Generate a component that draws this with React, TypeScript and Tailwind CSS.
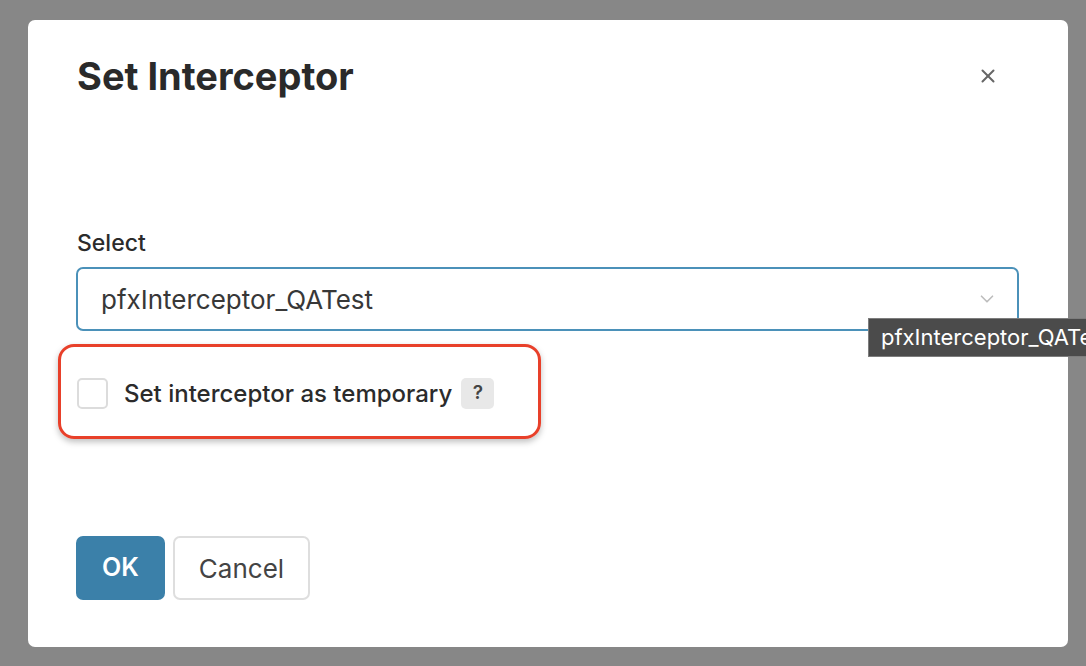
import { ChevronDown, X } from "lucide-react";

export default function App() {
  return (
    <div
      className="relative h-[666px] w-[1086px] overflow-hidden bg-[#878787] pl-[28px] pt-[20px]"
      style={{ fontFamily: "Inter, 'Noto Sans', sans-serif" }}
    >
      <div className="flex h-[627px] w-[1040px] flex-col rounded-[7px] bg-white pl-[49px] pr-[49px]">
        <div className="mt-[34px] flex items-start justify-between">
          <h1 className="text-[38px] leading-[44px] font-bold text-[#2a2a2a]">Set Interceptor</h1>
          <button className="mr-[20px] mt-[11px] text-[#666]">
            <X size={22} strokeWidth={2.2} />
          </button>
        </div>

        <label className="mt-[131px] text-[23px] leading-[28px] font-medium text-[#2b2b2b]">Select</label>
        <div className="mt-[10px] flex h-[64px] w-[943px] shrink-0 -ml-[1px] items-center justify-between rounded-[7px] border-2 border-[#4b91b9] pl-[23px] pr-[19px]">
          <span className="text-[26px] text-[#383838]">pfxInterceptor_QATest</span>
          <ChevronDown size={22} strokeWidth={1.8} className="text-[#bdbdbd]" />
        </div>

        <div className="mt-[13px] -ml-[19px] flex w-fit items-center rounded-[16px] border-[3px] border-[#e8402a] pb-[27px] pl-[16px] pr-[44px] pt-[31px] shadow-[0_3px_6px_rgba(0,0,0,0.25)]">
          <span className="h-[31px] w-[31px] rounded-[5px] border-2 border-[#dcdcdc]" />
          <span className="ml-[16px] text-[24px] leading-[31px] font-medium text-[#2b2b2b]">
            Set interceptor as temporary
          </span>
          <span className="ml-[9px] flex h-[31px] w-[33px] items-center justify-center rounded-[5px] bg-[#e8e8e8] text-[19px] font-semibold text-[#444]">
            ?
          </span>
        </div>

        <div className="mt-auto mb-[47px] flex gap-[8px] -ml-[1px]">
          <button className="h-[64px] w-[89px] rounded-[7px] bg-[#3b80a9] text-[25px] font-semibold text-white">
            OK
          </button>
          <button className="h-[64px] w-[137px] rounded-[7px] border-2 border-[#dedede] bg-white text-[26px] text-[#444]">
            Cancel
          </button>
        </div>
      </div>

      <div className="absolute left-[868px] top-[318px] flex h-[39px] items-center whitespace-nowrap border border-[#7d7d7d] bg-[#4b4b4b] pl-[12px] pr-[12px] text-[22px] text-white">
        pfxInterceptor_QATest
      </div>
    </div>
  );
}
